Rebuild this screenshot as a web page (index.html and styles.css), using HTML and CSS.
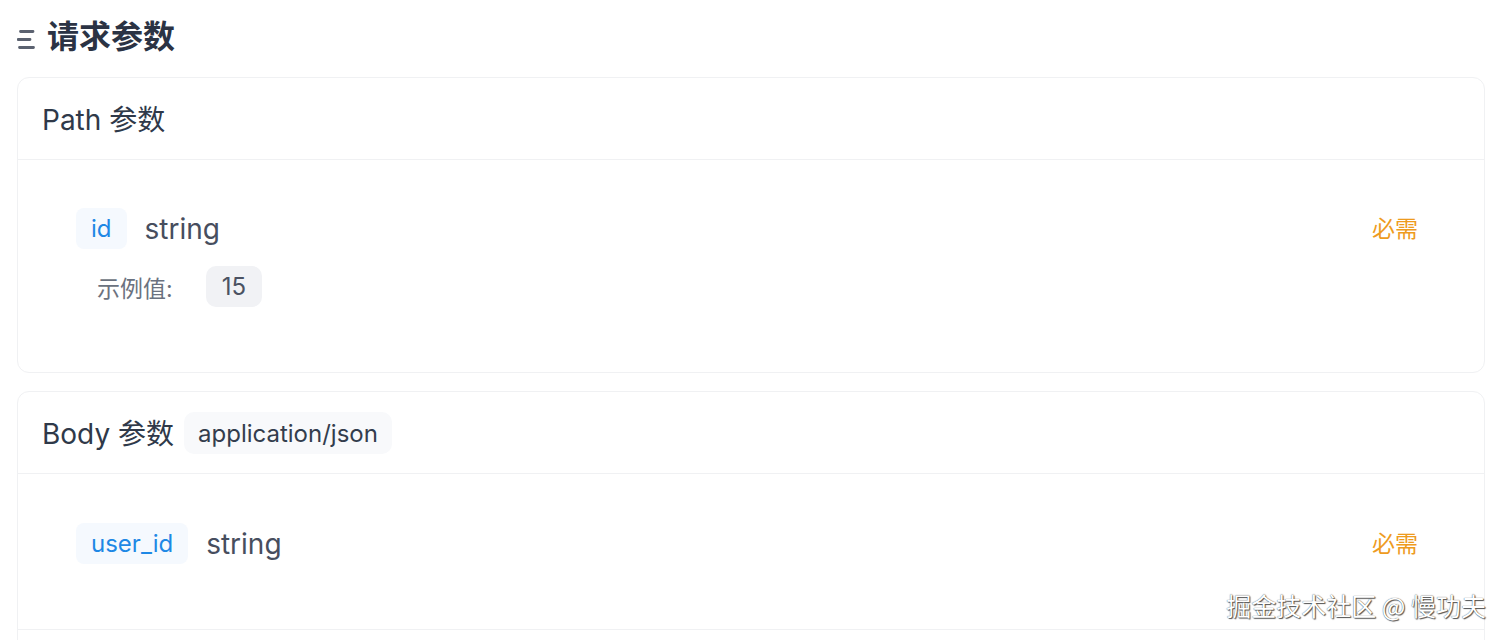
FILE: index.html
```html
<!DOCTYPE html>
<html lang="zh-CN">
<head>
<meta charset="utf-8">
<title>请求参数</title>
<link rel="stylesheet" href="styles.css">
</head>
<body>
<div class="page">
  <h2 class="title">
    <svg class="title-icon" width="18" height="22" viewBox="0 0 18 22" aria-hidden="true">
      <path d="M3.5 4.5H16M1 12.5H13M2.5 20.5H16.5" stroke="#5b6270" stroke-width="2.8" stroke-linecap="round" fill="none"/>
    </svg>
    <span>请求参数</span>
  </h2>

  <section class="card">
    <div class="card-head">Path 参数</div>
    <div class="card-body">
      <div class="param">
        <div class="param-main">
          <div class="param-left">
            <span class="pname">id</span>
            <span class="ptype">string</span>
          </div>
          <span class="required">必需</span>
        </div>
        <div class="example">
          <span class="example-label">示例值:</span>
          <span class="example-val">15</span>
        </div>
      </div>
    </div>
  </section>

  <section class="card">
    <div class="card-head">Body 参数 <span class="mime">application/json</span></div>
    <div class="card-body">
      <div class="param param-sep">
        <div class="param-main">
          <div class="param-left">
            <span class="pname">user_id</span>
            <span class="ptype">string</span>
          </div>
          <span class="required">必需</span>
        </div>
      </div>
      <div class="param"></div>
    </div>
  </section>
</div>
<div class="watermark">掘金技术社区 @ 慢功夫</div>
</body>
</html>
```

FILE: styles.css
```css
html, body {
  margin: 0;
  padding: 0;
  background: #ffffff;
}
body {
  font-family: "Inter", "Noto Sans CJK SC", sans-serif;
  color: #333d4d;
  overflow: hidden;
  height: 640px;
  position: relative;
}
.page {
  padding: 0 21px 0 17px;
}
.title {
  margin: 0;
  height: 77px;
  display: flex;
  align-items: center;
  gap: 12px;
  font-size: 32px;
  font-weight: 700;
  color: #2b3344;
  padding-bottom: 3px;
  box-sizing: border-box;
}
.title span {
  line-height: 1;
}
.title-icon {
  display: block;
  flex: none;
  margin-top: 2px;
}
.card {
  border: 1px solid #f0f1f3;
  border-radius: 12px;
  margin-bottom: 18px;
  background: #ffffff;
}
.card-head {
  height: 82px;
  box-sizing: border-box;
  padding-bottom: 2px;
  display: flex;
  align-items: center;
  padding-left: 24px;
  font-size: 28px;
  color: #2f3949;
  border-bottom: 1px solid #f0f1f3;
}
.mime {
  margin-left: 10px;
  margin-top: 3px;
  background: #f8f9fb;
  border-radius: 10px;
  height: 42px;
  display: inline-flex;
  align-items: center;
  padding: 0 14px;
  font-size: 24px;
  color: #333d4d;
}
.param {
  padding: 48px 66px 65px 58px;
}
.param-sep {
  padding-top: 49px;
  border-bottom: 1px solid #f0f1f3;
}
.param-main {
  display: flex;
  align-items: center;
  justify-content: space-between;
}
.param-left {
  display: flex;
  align-items: center;
  gap: 18px;
}
.pname {
  height: 41px;
  display: inline-flex;
  align-items: center;
  padding: 0 15px;
  background: #f5f9fe;
  border-radius: 8px;
  color: #1e88e5;
  font-size: 24px;
}
.ptype {
  font-size: 28px;
  color: #474e5e;
}
.required {
  font-size: 23px;
  color: #ee9b1e;
  margin-top: -3px;
}
.example {
  margin-top: 17px;
  padding-left: 21px;
  display: flex;
  align-items: center;
  gap: 33px;
}
.example-label {
  font-size: 23px;
  color: #6b7280;
}
.example-val {
  height: 41px;
  display: inline-flex;
  align-items: center;
  padding: 0 16px;
  background: #f1f2f5;
  border-radius: 10px;
  font-size: 24px;
  color: #4b5262;
}
.watermark {
  position: absolute;
  right: 20px;
  top: 587px;
  font-family: "Noto Sans CJK SC", sans-serif;
  font-size: 25px;
  color: #ffffff;
  text-shadow: 0 0 1px #333, 1px 1px 1px #555;
}
```
